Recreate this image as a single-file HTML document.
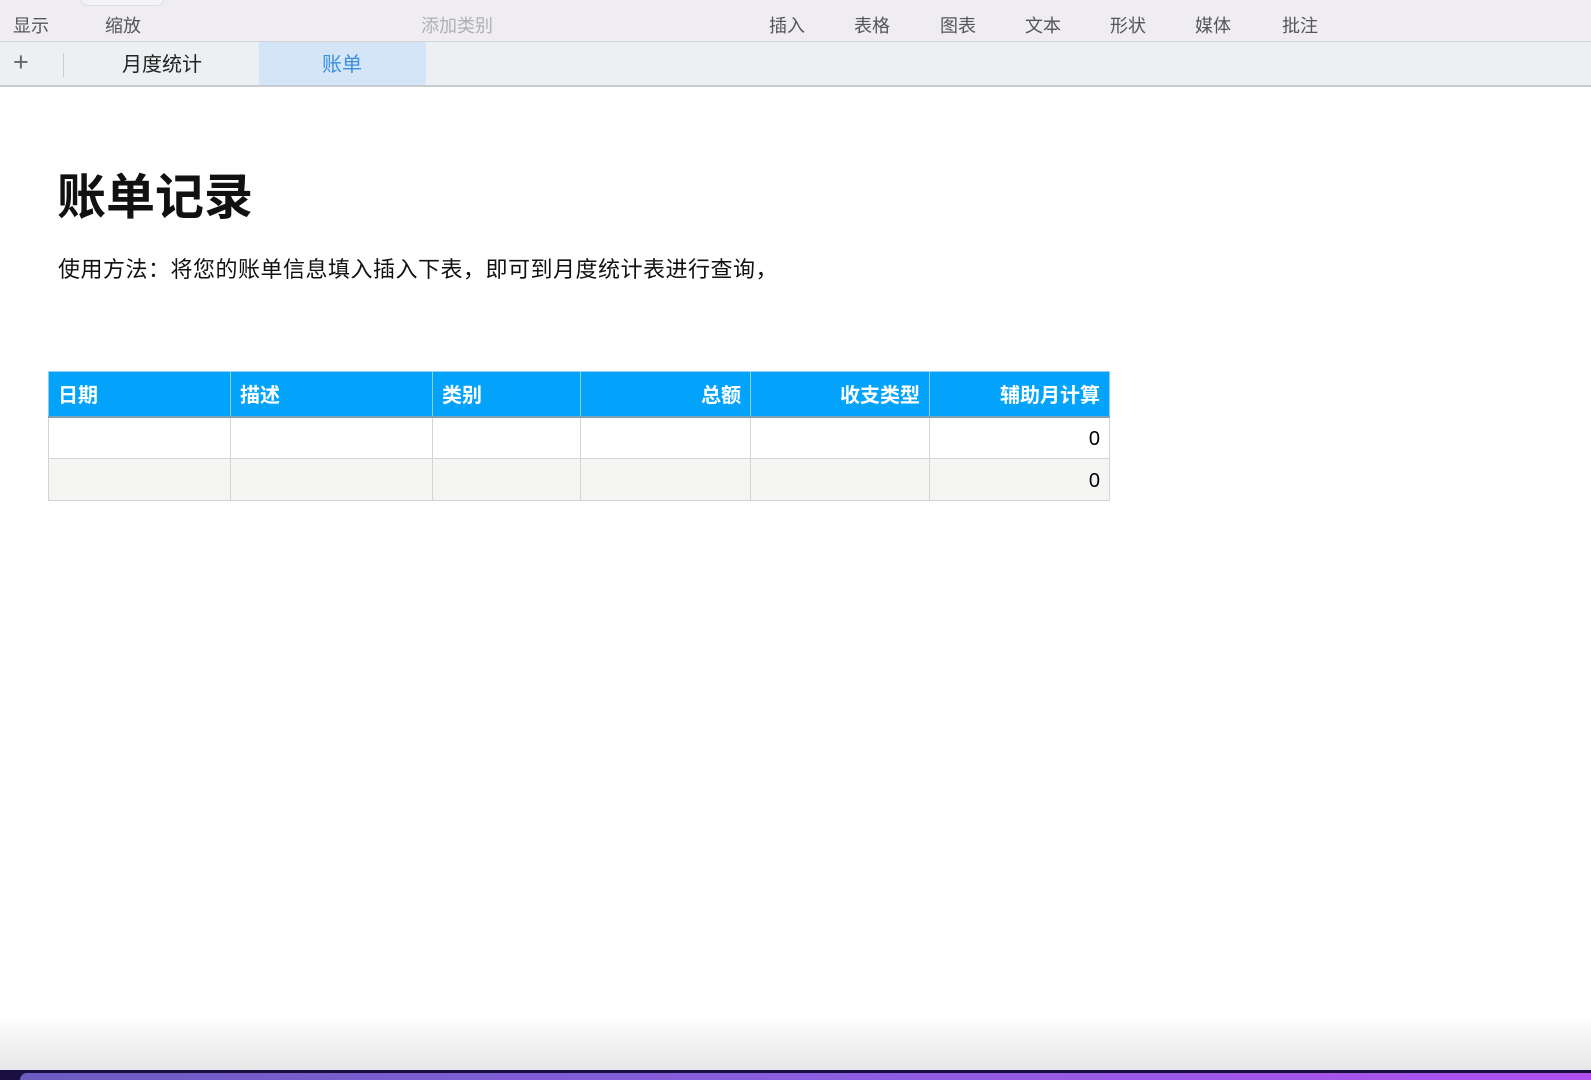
<!DOCTYPE html><html><head><meta charset="utf-8"><style>
*{margin:0;padding:0;box-sizing:border-box}
body{width:1591px;height:1080px;overflow:hidden;background:#fff;font-family:"Liberation Sans","Noto Sans CJK SC",sans-serif;position:relative}
.top{position:absolute;left:0;top:0;width:1591px;height:42px;background:#efedf2;border-bottom:1px solid #d4d3d8}
.top span{position:absolute;top:12px;font-size:18px;color:#555}
.tabs{position:absolute;top:42px;left:0;width:1591px;height:45px;background:#edf0f3;border-bottom:2px solid #c9cbcf}
.tabs span{position:absolute;font-size:20px}
.t{position:absolute}
table{position:absolute;left:48px;top:371px;border-collapse:collapse;font-size:20px}
td,th{border:1px solid #d4d4d4;padding:0 9px}
th{background:#04a3fb;color:#fff;height:45px;font-weight:bold;border-color:#8fd0f7;border-bottom:2px solid #7f9fb3}
td{height:42px;padding-top:3px}
.r{text-align:right}
.g td{background:#f5f5f4}
</style></head><body>
<div class="top">
<div style="position:absolute;left:81px;top:-6px;width:83px;height:12px;border:1px solid #ddd;border-radius:6px;background:#f4f3f6"></div>
<span style="left:13px">显示</span><span style="left:105px">缩放</span><span style="left:421px;color:#b0b0b0">添加类别</span>
<span style="left:769px">插入</span><span style="left:854px">表格</span><span style="left:940px">图表</span><span style="left:1025px">文本</span><span style="left:1110px">形状</span><span style="left:1195px">媒体</span><span style="left:1282px">批注</span>
</div>
<div class="tabs">
<span style="left:13px;top:5px;font-size:27px;color:#666;font-weight:200">+</span>
<div style="position:absolute;left:63px;top:11px;width:1px;height:24px;background:#ccc"></div>
<span style="left:122px;top:6px;color:#222">月度统计</span>
<div style="position:absolute;left:259px;top:0;width:167px;height:43px;background:#d4e5f8"></div>
<span style="left:322px;top:6px;color:#3a8fe0">账单</span>
</div>
<div class="t" style="left:57px;top:158px;font-size:49px;font-weight:bold;color:#111">账单记录</div>
<div class="t" style="left:58px;top:252px;font-size:22px;letter-spacing:0.5px;color:#111">使用方法：将您的账单信息填入插入下表，即可到月度统计表进行查询，</div>
<table>
<tr><th style="width:182px;text-align:left">日期</th><th style="width:202px;text-align:left">描述</th><th style="width:148px;text-align:left">类别</th><th style="width:170px" class="r">总额</th><th style="width:179px" class="r">收支类型</th><th style="width:180px" class="r">辅助月计算</th></tr>
<tr><td></td><td></td><td></td><td></td><td></td><td class="r">0</td></tr>
<tr class="g"><td></td><td></td><td></td><td></td><td></td><td class="r">0</td></tr>
</table>
<div style="position:absolute;left:0;top:1015px;width:1591px;height:55px;background:linear-gradient(#fff,#e6e6e8)"></div>
<div style="position:absolute;left:0;top:1070px;width:1591px;height:10px;background:#1a1040"></div>
<div style="position:absolute;left:20px;top:1073px;width:1571px;height:7px;border-radius:10px 0 0 0;background:linear-gradient(90deg,#6b5cc0,#8a5ee0,#b050ee)"></div>
</body></html>
